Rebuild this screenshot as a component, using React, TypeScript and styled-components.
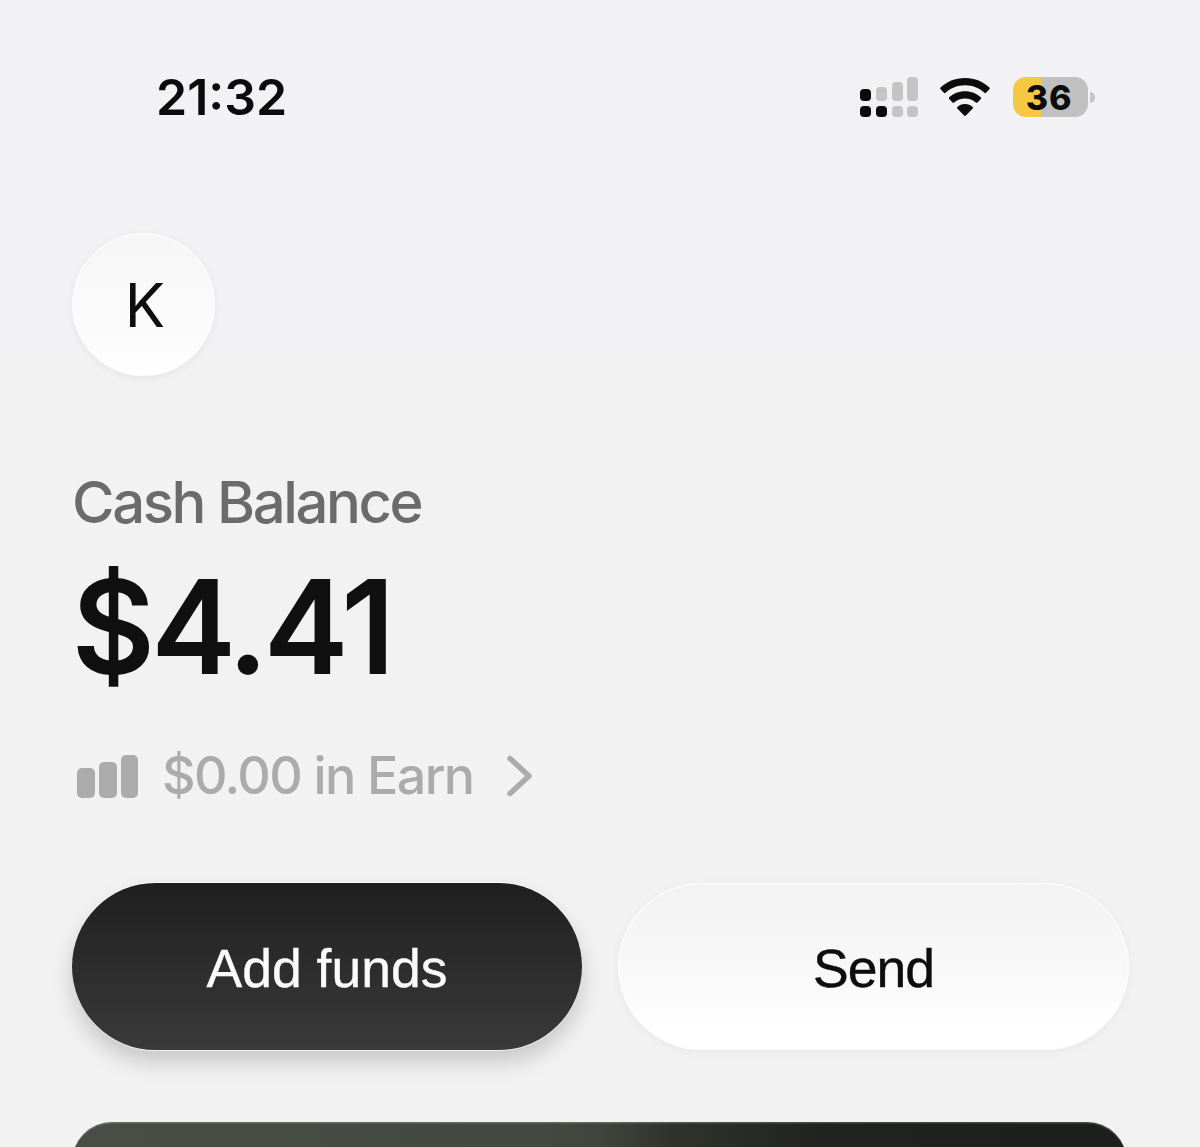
import React from "react";
import styled, { createGlobalStyle } from "styled-components";

const Global = createGlobalStyle`
  html, body { margin: 0; padding: 0; background: #f2f2f2; }
  * { box-sizing: border-box; }
`;

const Page = styled.div`
  width: 1200px;
  height: 1147px;
  overflow: hidden;
  padding: 0 71px 0 72px;
  background: linear-gradient(180deg, #f2f2f4 0, #f2f2f4 348px, #f2f2f2 349px, #f2f2f2 100%);
  font-family: Inter, "Liberation Sans", sans-serif;
`;

const StatusBar = styled.header`
  height: 233px;
  padding: 77px 34px 0 84px;
  display: flex;
  justify-content: space-between;
  align-items: flex-start;
`;

const Clock = styled.div`
  font-size: 50px;
  font-weight: 600;
  line-height: 40px;
  color: #0b0b0b;
`;

const StatusIcons = styled.div`
  display: flex;
  align-items: flex-start;
  gap: 22px;
  height: 40px;
`;

const BatteryWrap = styled.div`
  display: flex;
  align-items: center;
  gap: 2px;
  height: 40px;
`;

const Battery = styled.div<{ $level: number }>`
  width: 75px;
  height: 40px;
  padding-right: 3px;
  border-radius: 13px;
  background: linear-gradient(90deg, #f5c842 0, #f5c842 ${(p) => p.$level}%, #c0c0c0 ${(p) => p.$level}%, #c0c0c0 100%);
  display: flex;
  align-items: center;
  justify-content: center;
  font-size: 34px;
  font-weight: 800;
  color: #0c0c0c;
  letter-spacing: 0.8px;
`;

const BatteryTip = styled.div`
  width: 5px;
  height: 11px;
  background: #c6c6c6;
  border-radius: 0 6px 6px 0;
`;

const Avatar = styled.div`
  width: 143px;
  height: 143px;
  padding-left: 3px;
  border-radius: 50%;
  background: linear-gradient(180deg, #f6f6f6 0%, #fefefe 100%);
  box-shadow: inset 0 0 0 1.5px #fbfbfb, 0 2px 8px rgba(0, 0, 0, 0.06);
  display: flex;
  align-items: center;
  justify-content: center;
  font-size: 60px;
  color: #0e0e0e;
`;

const Label = styled.div`
  margin-top: 96px;
  font-size: 58px;
  font-weight: 450;
  line-height: 60px;
  color: #6b6b6b;
  letter-spacing: -2.4px;
`;

const Amount = styled.div`
  margin-top: 31px;
  font-size: 128px;
  font-weight: 500;
  -webkit-text-stroke: 2px #101010;
  line-height: 128px;
  letter-spacing: -3px;
  color: #101010;
`;

const EarnRow = styled.div`
  margin-top: 54px;
  margin-left: 5px;
  display: flex;
  align-items: center;
  height: 62px;
`;

const EarnText = styled.span`
  margin-left: 24px;
  font-size: 52px;
  font-weight: 450;
  line-height: 62px;
  letter-spacing: -1.6px;
  color: #ababab;
`;

const EarnChevron = styled.svg`
  margin-left: 33px;
`;

const Actions = styled.div`
  margin-top: 76px;
  display: grid;
  grid-template-columns: 510px 511px;
  gap: 36px;
`;

const PillButton = styled.button<{ $dark?: boolean }>`
  height: 167px;
  border: 0;
  padding: 3px 0 0;
  border-radius: 84px;
  font-family: "Liberation Sans", Arial, sans-serif;
  font-size: 53.5px;
  -webkit-text-stroke: 0.4px currentColor;
  letter-spacing: ${(p) => (p.$dark ? "0" : "-1px")};
  color: ${(p) => (p.$dark ? "#fafafa" : "#0d0d0d")};
  background: ${(p) =>
    p.$dark
      ? "linear-gradient(180deg, #1f1f1f 0%, #3a3a3a 100%)"
      : "linear-gradient(180deg, #f2f2f2 0%, #f8f8f8 50%, #ffffff 88%)"};
  box-shadow: ${(p) =>
    p.$dark
      ? "0 -1px 0 rgba(255, 255, 255, 0.7), 0 1px 0 rgba(255, 255, 255, 0.7), 0 12px 22px rgba(0, 0, 0, 0.18)"
      : "inset 0 0 0 1.5px #fbfbfb, 0 2px 10px rgba(0, 0, 0, 0.05)"};
`;

const PromoCard = styled.section`
  margin: 72px 2px 0 0;
  height: 140px;
  border-radius: 40px;
  background: linear-gradient(90deg, #474e45 0%, #434941 45%, #3f443c 50%, #2f332c 57%, #1f221e 72%, #1c1f1b 100%);
  box-shadow: inset 0 1.5px 0 rgba(255, 255, 255, 0.18);
`;

function SignalIcon() {
  const black = "#0b0b0b";
  const gray = "#c4c4c4";
  return (
    <svg width="58" height="40" viewBox="0 0 58 40" style={{ display: "block" }}>
      <rect x="0" y="12" width="11" height="12" rx="4" fill={black} />
      <rect x="0" y="29" width="11" height="11" rx="4" fill={black} />
      <rect x="16" y="10" width="11" height="14" rx="4" fill={gray} />
      <rect x="16" y="29" width="11" height="11" rx="4" fill={black} />
      <rect x="32" y="5" width="11" height="19" rx="4" fill={gray} />
      <rect x="32" y="29" width="11" height="11" rx="4" fill={gray} />
      <rect x="47" y="0" width="11" height="24" rx="4" fill={gray} />
      <rect x="47" y="29" width="11" height="11" rx="4" fill={gray} />
    </svg>
  );
}

function WifiIcon() {
  return (
    <svg width="52" height="40" viewBox="0 0 52 40" style={{ display: "block", marginLeft: "-1px" }}>
      <path d="M26 1C16 1 7.500 4.800 1.600 10.600c-.5.5-.5 1.200 0 1.700l3.300 3.500c.5.5 1.200.5 1.700 0C11.700 11 18.500 8.300 26 8.300s14.300 2.700 19.400 7.500c.5.5 1.200.5 1.700 0l3.300-3.500c.5-.5.5-1.200 0-1.700C44.500 4.800 36 1 26 1z" fill="#0b0b0b" />
      <path d="M26 14.200c-6.200 0-11.700 2.300-15.800 6-.5.5-.5 1.200 0 1.700l3.300 3.500c.5.5 1.200.5 1.700 0 2.900-2.500 6.700-4 10.800-4s7.900 1.500 10.800 4c.5.5 1.200.5 1.700 0l3.300-3.500c.5-.5.5-1.200 0-1.700-4.100-3.700-9.600-6-15.800-6z" fill="#0b0b0b" />
      <path d="M26 27c-3 0-5.700 1.100-7.700 2.900-.5.5-.5 1.200 0 1.700l6.800 7c.5.5 1.300.5 1.800 0l6.800-7c.5-.5.5-1.200 0-1.700C31.700 28.100 29 27 26 27z" fill="#0b0b0b" />
    </svg>
  );
}

function EarnBars() {
  return (
    <svg width="61" height="43" viewBox="0 0 61 43" style={{ display: "block" }}>
      <rect x="0" y="13" width="18" height="30" rx="5" fill="#ababab" />
      <rect x="22" y="7" width="18" height="36" rx="5" fill="#ababab" />
      <rect x="44" y="0" width="17" height="43" rx="5" fill="#ababab" />
    </svg>
  );
}

export default function App() {
  return (
    <>
      <Global />
      <Page>
        <StatusBar>
          <Clock>21:32</Clock>
          <StatusIcons>
            <SignalIcon />
            <WifiIcon />
            <BatteryWrap>
              <Battery $level={37}>36</Battery>
              <BatteryTip />
            </BatteryWrap>
          </StatusIcons>
        </StatusBar>
        <Avatar>K</Avatar>
        <Label>Cash Balance</Label>
        <Amount>$4.41</Amount>
        <EarnRow>
          <EarnBars />
          <EarnText>$0.00 in Earn</EarnText>
          <EarnChevron width="25" height="42" viewBox="0 0 25 42" fill="none">
            <path d="M3 3.500l19 17.500-19 17.500" stroke="#ababab" strokeWidth="5.500" strokeLinecap="round" strokeLinejoin="round" />
          </EarnChevron>
        </EarnRow>
        <Actions>
          <PillButton $dark>Add funds</PillButton>
          <PillButton>Send</PillButton>
        </Actions>
        <PromoCard />
      </Page>
    </>
  );
}
